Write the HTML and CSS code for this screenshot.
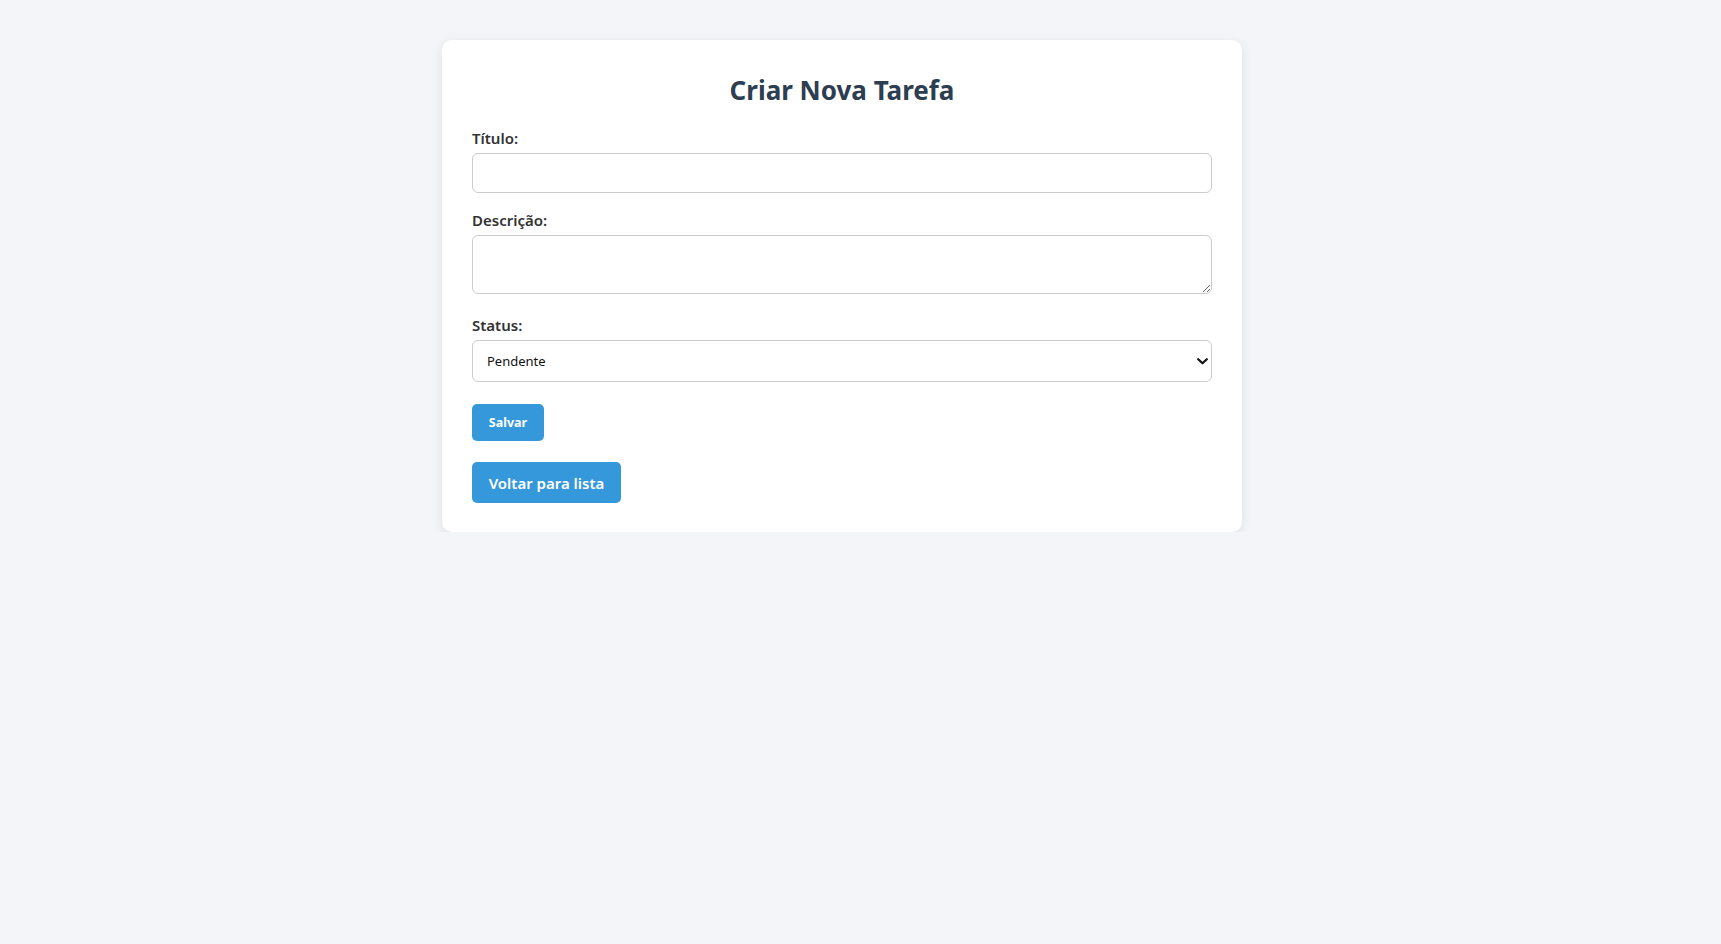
FILE: index.html
```html
<!DOCTYPE html>
<html lang="pt-BR">
<head>
<meta charset="utf-8">
<title>Criar Nova Tarefa</title>
<link rel="stylesheet" href="styles.css">
</head>
<body>
<div class="page">
  <main class="card">
    <h1 class="title">Criar Nova Tarefa</h1>
    <form class="form">
      <div class="group">
        <label class="label" for="titulo">Título:</label>
        <input class="field field-input" id="titulo" type="text">
      </div>
      <div class="group">
        <label class="label" for="descricao">Descrição:</label>
        <textarea class="field field-area" id="descricao"></textarea>
      </div>
      <div class="group">
        <label class="label" for="status">Status:</label>
        <div class="select-wrap">
          <select class="field field-select" id="status">
            <option>Pendente</option>
            <option>Em andamento</option>
            <option>Concluída</option>
          </select>
          <svg class="chevron" width="11" height="7" viewBox="0 0 11 7" aria-hidden="true"><path d="M1.2 1.2 L5.5 5.3 L9.8 1.2" fill="none" stroke="#111" stroke-width="2.2" stroke-linecap="round" stroke-linejoin="round"/></svg>
        </div>
      </div>
      <button class="btn btn-save" type="button">Salvar</button>
    </form>
    <a class="btn btn-back" href="#">Voltar para lista</a>
  </main>
</div>
</body>
</html>
```

FILE: styles.css
```css
* { box-sizing: border-box; }

html, body {
  margin: 0;
  padding: 0;
  background: #f4f5f9;
  font-family: "Noto Sans", "Open Sans", "DejaVu Sans", sans-serif;
  color: #333;
}

.page {
  padding: 40px 0 0 442px;
}

.card {
  width: 800px;
  background: #ffffff;
  border-radius: 10px;
  padding: 30px 30px 29px;
  box-shadow: 0 3px 12px rgba(0, 0, 0, 0.09);
}

.title {
  margin: 0 0 20px;
  text-align: center;
  font-size: 26px;
  line-height: 40px;
  font-weight: 700;
  color: #2c3e50;
}

.form {
  display: flex;
  flex-direction: column;
  align-items: flex-start;
}

.group {
  width: 100%;
  margin-bottom: 19px;
}

.label {
  display: block;
  font-size: 15px;
  line-height: 16px;
  font-weight: 600;
  color: #333;
  margin-bottom: 7px;
}

.field {
  display: block;
  width: 100%;
  border: 1px solid #cccccc;
  border-radius: 6px;
  background: #fff;
  font-family: "Noto Sans", "Open Sans", sans-serif;
  margin: 0;
}

.field-input { height: 40px; padding: 0 12px; }

.field-area { height: 59px; padding: 8px 12px; resize: vertical; margin-bottom: 4px; }

.select-wrap { position: relative; }

.field-select {
  height: 42px;
  padding: 0 14px;
  font-size: 13px;
  color: #111;
  appearance: none;
  -webkit-appearance: none;
}

.chevron {
  position: absolute;
  right: 4px;
  top: 18px;
  pointer-events: none;
}

.btn {
  display: inline-flex;
  align-items: center;
  justify-content: center;
  background: #3498db;
  color: #fff;
  border: none;
  border-radius: 5px;
  text-decoration: none;
  font-family: "Noto Sans", "Open Sans", sans-serif;
  font-weight: 700;
}

.btn-save {
  margin-top: 3px;
  width: 72px;
  height: 37px;
  font-size: 12.5px;
  padding: 0;
}

.btn-back {
  margin-top: 21px;
  width: 149px;
  height: 41px;
  font-size: 15px;
  font-weight: 600;
}
```
